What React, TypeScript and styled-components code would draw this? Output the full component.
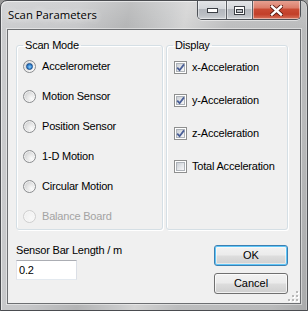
import React from "react";
import styled, { createGlobalStyle, css } from "styled-components";

const GlobalStyle = createGlobalStyle`
  html, body { margin: 0; padding: 0; background: #9a9a9a; }
  * { box-sizing: border-box; }
`;

const Window = styled.div`
  position: relative;
  width: 308px;
  height: 311px;
  border: 1px solid #4a4c50;
  border-radius: 7px 7px 0 0;
  display: flex;
  flex-direction: column;
  background:
    linear-gradient(to bottom, rgba(255,255,255,0.18), rgba(255,255,255,0) 30px),
    linear-gradient(100deg, #cbccce 0%, #c6c7c9 22%, #b3b4b5 36%, #c9cacb 48%, #d3d3d3 52%, #bcbdbe 64%, #b9babb 90%, #a9aaab 100%);
  box-shadow: inset 1px 1px 0 rgba(255,255,255,0.55), inset -1px 0 0 rgba(255,255,255,0.3);
  overflow: hidden;
`;

const TitleBar = styled.div`
  height: 28px;
  display: flex;
  justify-content: space-between;
  align-items: flex-start;
  padding-left: 7px;
`;

const Title = styled.div`
  margin-top: 6px;
  font-family: "Open Sans", "Noto Sans", sans-serif;
  font-size: 11.3px;
  line-height: 16px;
  color: #000;
  text-shadow: 0 0 6px rgba(255,255,255,0.95), 0 0 10px rgba(255,255,255,0.8);
`;

const CaptionGroup = styled.div`
  display: flex;
  margin-top: -1px;
  margin-right: 6px;
  height: 20px;
  border: 1px solid #4d5157;
  border-top: none;
  border-radius: 0 0 5px 5px;
  overflow: hidden;
  box-shadow: 0 1px 0 rgba(255,255,255,0.5);
`;

const CaptionButton = styled.div<{ $w: number; $close?: boolean }>`
  width: ${(p) => p.$w}px;
  height: 100%;
  display: flex;
  align-items: center;
  justify-content: center;
  padding-top: 1px;
  box-shadow: inset 0 0 0 1px rgba(255,255,255,0.45);
  ${(p) =>
    p.$close
      ? css`
          background: linear-gradient(to bottom, #e8a596 0%, #dc7f6c 40%, #c94a33 50%, #c23f29 75%, #d8735c 100%);
        `
      : css`
          background: linear-gradient(to bottom, #e4e6e9 0%, #d4d7db 45%, #b3b7bd 50%, #bcc0c5 80%, #cfd2d6 100%);
          border-right: 1px solid #5b5f65;
        `}
`;

const Client = styled.div`
  position: relative;
  flex: 1;
  margin: 0 6px 6px 6px;
  border: 1px solid #6d6f72;
  box-shadow: 0 0 0 1px rgba(255,255,255,0.45);
  background: #f0f0f0;
  padding: 8px 12px 0 8px;
  display: flex;
  flex-direction: column;
  font-family: "Liberation Sans", Arial, sans-serif;
  font-size: 11px;
  letter-spacing: -0.2px;
  color: #000;
`;

const Groups = styled.div`
  display: grid;
  grid-template-columns: 147px 122px;
  column-gap: 3px;
`;

const Group = styled.fieldset`
  margin: 0;
  padding: 0;
  min-width: 0;
  height: 192px;
  border: 1px solid #d5dfe5;
  border-radius: 3px;
  box-shadow: inset 1px 1px 0 #ffffff, 1px 1px 0 #ffffff;
`;

const Legend = styled.legend`
  margin-left: 6px;
  padding: 0 2px;
  line-height: 14px;
  font-size: 11px;
`;

const OptionList = styled.div<{ $top: number; $gap: number }>`
  display: flex;
  flex-direction: column;
  padding-top: ${(p) => p.$top}px;
  gap: ${(p) => p.$gap}px;
`;

const OptionRow = styled.div<{ $indent: number; $gap: number; $disabled?: boolean }>`
  height: 18px;
  display: flex;
  align-items: center;
  padding-left: ${(p) => p.$indent}px;
  gap: ${(p) => p.$gap}px;
  line-height: 13px;
  color: ${(p) => (p.$disabled ? "#a3a3a3" : "#000")};
`;

const RadioCircle = styled.span<{ $checked?: boolean; $disabled?: boolean }>`
  position: relative;
  width: 13px;
  height: 13px;
  flex: none;
  border-radius: 50%;
  border: 1px solid ${(p) => (p.$disabled ? "#cfcfcf" : "#8a8c8e")};
  background: ${(p) =>
    p.$disabled
      ? "radial-gradient(circle at 65% 65%, #f8f8f8 0%, #ededed 100%)"
      : "radial-gradient(circle at 68% 68%, #fbfbfb 0%, #e6e6e6 40%, #c2c3c5 100%)"};
  box-shadow: inset 0 0 0 1px ${(p) => (p.$disabled ? "#f7f7f7" : "rgba(255,255,255,0.6)")};
  ${(p) =>
    p.$checked &&
    css`
      &::after {
        content: "";
        position: absolute;
        left: 2px;
        top: 2px;
        width: 7px;
        height: 7px;
        border-radius: 50%;
        box-sizing: border-box;
        border: 1px solid #174c8c;
        background: radial-gradient(circle at 55% 60%, #8fd0fb 0%, #3f8fd8 45%, #1b5aa6 100%);
      }
    `}
`;

const CheckSquare = styled.span`
  width: 13px;
  height: 13px;
  flex: none;
  border: 1px solid #8e8f8f;
  background: #ffffff;
  padding: 1px;
  display: flex;
`;

const CheckInner = styled.span`
  flex: 1;
  border: 1px solid #aeb3b9;
  background: linear-gradient(135deg, #cbcfd5 0%, #e5e7ea 55%, #f7f7f7 100%);
  position: relative;
  display: flex;
  align-items: center;
  justify-content: center;
`;

const CheckMark = styled.svg`
  position: absolute;
  left: -2px;
  top: -2px;
`;

const Bottom = styled.div`
  display: grid;
  grid-template-columns: 1fr 74px;
`;

const FieldCol = styled.div`
  display: flex;
  flex-direction: column;
  padding-top: 14px;
`;

const FieldLabel = styled.div`
  line-height: 13px;
`;

const TextBox = styled.div`
  margin-top: 3px;
  width: 61px;
  height: 20px;
  background: #fff;
  border: 1px solid;
  border-color: #abadb3 #dbdfe6 #e3e9ef #e2e3ea;
  padding: 0 0 0 2px;
  display: flex;
  align-items: center;
`;

const ButtonCol = styled.div`
  display: flex;
  flex-direction: column;
  padding-top: 15px;
  gap: 7px;
`;

const Button = styled.div<{ $default?: boolean }>`
  height: 21px;
  border-radius: 3px;
  border: 1px solid ${(p) => (p.$default ? "#3c7fb1" : "#707070")};
  background: linear-gradient(to bottom, #f2f2f2 0%, #ebebeb 48%, #dddddd 52%, #cfcfcf 100%);
  box-shadow: ${(p) =>
    p.$default
      ? "inset 0 0 0 1px #5fc6f8, inset 0 0 0 2px rgba(255,255,255,0.5)"
      : "inset 0 0 0 1px rgba(255,255,255,0.7)"};
  display: flex;
  align-items: center;
  justify-content: center;
  line-height: 13px;
  font-size: 11px;
  letter-spacing: 0;
`;

const Grip = styled.svg`
  position: absolute;
  right: 1px;
  bottom: 1px;
`;

const radios = [
  { label: "Accelerometer", checked: true },
  { label: "Motion Sensor" },
  { label: "Position Sensor" },
  { label: "1-D Motion" },
  { label: "Circular Motion" },
  { label: "Balance Board", disabled: true },
];

const checks = [
  { label: "x-Acceleration", checked: true },
  { label: "y-Acceleration", checked: true },
  { label: "z-Acceleration", checked: true },
  { label: "Total Acceleration", checked: false },
];

function MinIcon() {
  return (
    <svg width="11" height="6" viewBox="0 0 11 6">
      <rect x="0.5" y="1.5" width="10" height="4" fill="#fff" stroke="#3b3f45" strokeWidth="1" />
    </svg>
  );
}

function MaxIcon() {
  return (
    <svg width="11" height="9" viewBox="0 0 11 9">
      <rect x="0.5" y="0.5" width="10" height="8" fill="#fff" stroke="#3b3f45" strokeWidth="1" />
      <rect x="2.5" y="3.5" width="6" height="3" fill="#b9bdc2" stroke="#3b3f45" strokeWidth="1" />
    </svg>
  );
}

function CloseIcon() {
  return (
    <svg width="13" height="11" viewBox="0 0 13 11">
      <path d="M2 1.5 L11 9.5 M11 1.5 L2 9.5" stroke="#5a1a10" strokeWidth="4.2" strokeLinecap="square" />
      <path d="M2 1.5 L11 9.5 M11 1.5 L2 9.5" stroke="#ffffff" strokeWidth="2.4" strokeLinecap="square" />
    </svg>
  );
}

export default function App() {
  return (
    <>
      <GlobalStyle />
      <Window>
        <TitleBar>
          <Title>Scan Parameters</Title>
          <CaptionGroup>
            <CaptionButton $w={29}>
              <MinIcon />
            </CaptionButton>
            <CaptionButton $w={26}>
              <MaxIcon />
            </CaptionButton>
            <CaptionButton $w={47} $close>
              <CloseIcon />
            </CaptionButton>
          </CaptionGroup>
        </TitleBar>
        <Client>
          <Groups>
            <Group>
              <Legend>Scan Mode</Legend>
              <OptionList $top={5} $gap={12}>
                {radios.map((r) => (
                  <OptionRow key={r.label} $indent={6} $gap={6} $disabled={r.disabled}>
                    <RadioCircle $checked={r.checked} $disabled={r.disabled} />
                    <span>{r.label}</span>
                  </OptionRow>
                ))}
              </OptionList>
            </Group>
            <Group>
              <Legend>Display</Legend>
              <OptionList $top={6} $gap={15}>
                {checks.map((c) => (
                  <OptionRow key={c.label} $indent={7} $gap={5}>
                    <CheckSquare>
                      <CheckInner>
                        {c.checked && (
                          <CheckMark width="11" height="11" viewBox="0 0 11 11">
                            <path d="M2.2 5.6 L4.6 8.2 L9 2.4" fill="none" stroke="#4a5f97" strokeWidth="1.8" />
                          </CheckMark>
                        )}
                      </CheckInner>
                    </CheckSquare>
                    <span>{c.label}</span>
                  </OptionRow>
                ))}
              </OptionList>
            </Group>
          </Groups>
          <Bottom>
            <FieldCol>
              <FieldLabel>Sensor Bar Length / m</FieldLabel>
              <TextBox>0.2</TextBox>
            </FieldCol>
            <ButtonCol>
              <Button $default>OK</Button>
              <Button>Cancel</Button>
            </ButtonCol>
          </Bottom>
          <Grip width="11" height="11" viewBox="0 0 11 11">
            {[
              [8, 0],
              [8, 4],
              [4, 4],
              [8, 8],
              [4, 8],
              [0, 8],
            ].map(([x, y]) => (
              <g key={`${x}-${y}`}>
                <rect x={x + 1} y={y + 1} width="2" height="2" fill="#ffffff" />
                <rect x={x} y={y} width="2" height="2" fill="#b8b8b8" />
              </g>
            ))}
          </Grip>
        </Client>
      </Window>
    </>
  );
}
